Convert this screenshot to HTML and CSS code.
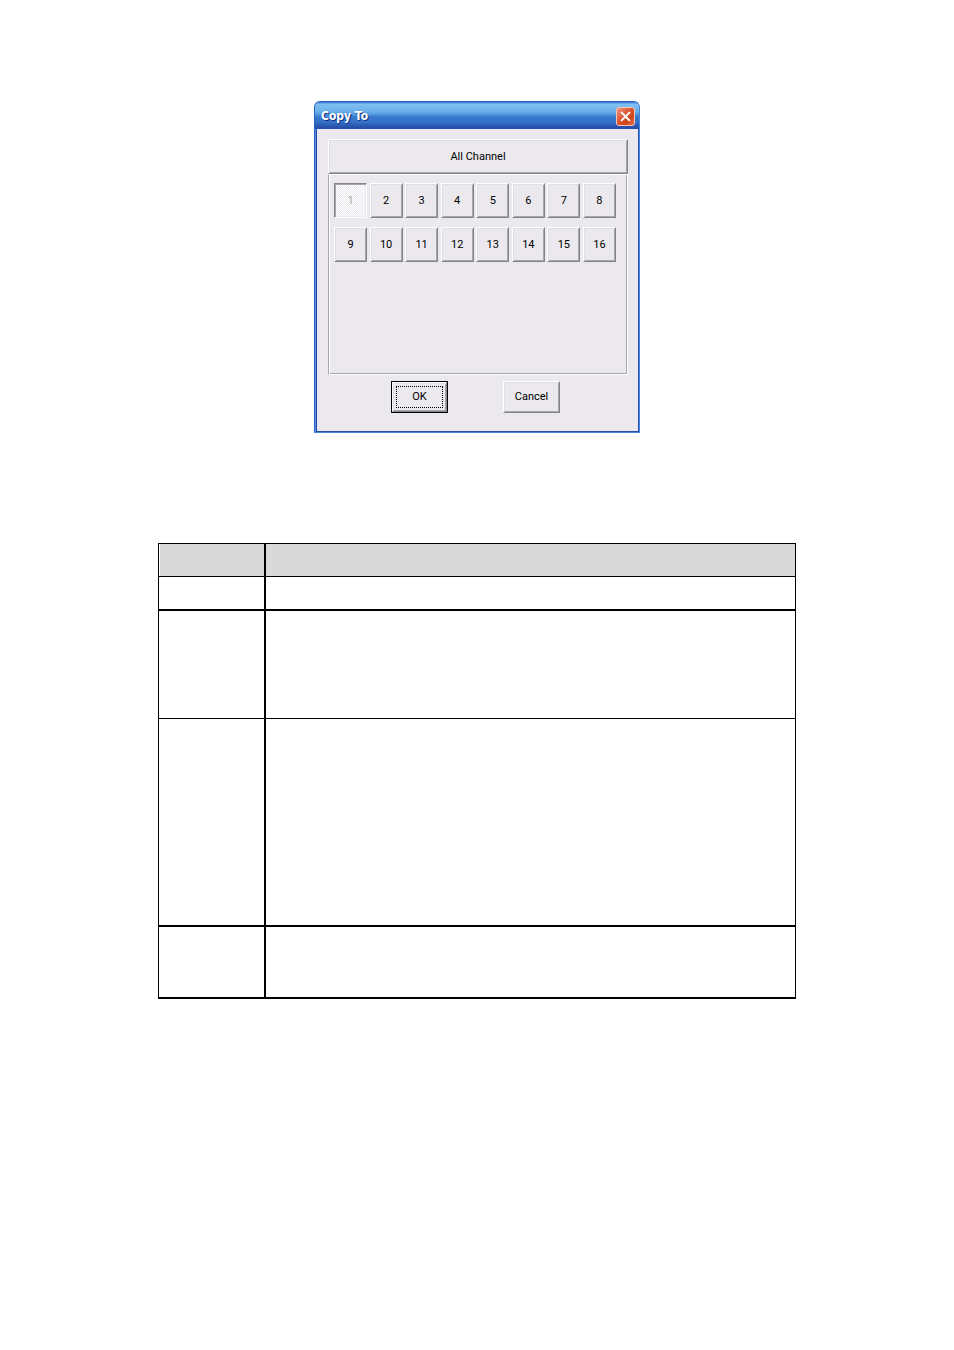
FILE: index.html
```html
<!DOCTYPE html>
<html lang="en">
<head>
<meta charset="utf-8">
<title>Copy To</title>
<link rel="stylesheet" href="styles.css">
</head>
<body>
<main class="page">
  <section class="dialog" role="dialog" aria-labelledby="dialog-title">
    <header class="titlebar">
      <h1 class="title" id="dialog-title">Copy To</h1>
      <button class="close" type="button" aria-label="Close">
        <svg class="close-icon" viewBox="0 0 18 18" aria-hidden="true">
          <path d="M5 5L13 13M13 5L5 13" fill="none" stroke="#fff" stroke-width="2" stroke-linecap="square"/>
        </svg>
      </button>
    </header>
    <div class="content">
      <button class="btn btn-all" type="button">All Channel</button>
      <div class="panel">
        <div class="channels">
          <button class="btn channel" type="button" disabled>1</button>
          <button class="btn channel" type="button">2</button>
          <button class="btn channel" type="button">3</button>
          <button class="btn channel" type="button">4</button>
          <button class="btn channel" type="button">5</button>
          <button class="btn channel" type="button">6</button>
          <button class="btn channel" type="button">7</button>
          <button class="btn channel" type="button">8</button>
          <button class="btn channel" type="button">9</button>
          <button class="btn channel" type="button">10</button>
          <button class="btn channel" type="button">11</button>
          <button class="btn channel" type="button">12</button>
          <button class="btn channel" type="button">13</button>
          <button class="btn channel" type="button">14</button>
          <button class="btn channel" type="button">15</button>
          <button class="btn channel" type="button">16</button>
        </div>
      </div>
      <footer class="actions">
        <button class="default-frame" type="button"><span class="default-face"><span class="focus-ring">OK</span></span></button>
        <button class="btn action" type="button">Cancel</button>
      </footer>
    </div>
  </section>

  <table class="info">
    <colgroup><col class="col-name"><col></colgroup>
    <thead>
      <tr class="row-head"><th></th><th></th></tr>
    </thead>
    <tbody>
      <tr class="row-line"><td></td><td></td></tr>
      <tr class="row-short"><td></td><td></td></tr>
      <tr class="row-tall"><td></td><td></td></tr>
      <tr class="row-last"><td></td><td></td></tr>
    </tbody>
  </table>
</main>
</body>
</html>
```
FILE: styles.css
```css
* {
  box-sizing: border-box;
}

body {
  margin: 0;
  background: #fff;
  color: #000;
  font-family: Roboto, "Liberation Sans", Arial, sans-serif;
  font-size: 11px;
}

.page {
  display: flex;
  flex-direction: column;
  align-items: center;
  gap: 110px;
  padding: 101px 16px;
}

/* Dialog window */
.dialog {
  width: 100%;
  max-width: 326px;
  border-radius: 6px 6px 0 0;
  background: #ebe9ed;
  border: 1px solid #2a62c8;
  border-right-color: #4a86dc;
  border-bottom-color: #4a86dc;
  box-shadow: inset 1px 0 #5590e4, inset 2px 0 #1f44a4, inset -1px 0 #2450b0, inset 0 -1px #2a4fa0;
}

.titlebar {
  display: flex;
  align-items: center;
  justify-content: space-between;
  height: 27px;
  padding: 3px 4px 2px 6px;
  border-radius: 5px 5px 0 0;
  background: linear-gradient(#2e6ed0 0, #80c0f2 8%, #6cb0ea 35%, #4c92de 48%, #3878cc 55%, #3470c8 75%, #2850ac 92%, #2450b0 100%);
}

.title {
  margin: 0;
  color: #fff;
  font-family: "DejaVu Sans Condensed", "DejaVu Sans", sans-serif;
  font-size: 12px;
  line-height: 16px;
  font-weight: bold;
  text-shadow: 1px 1px #14307c;
}

.close {
  display: flex;
  width: 19px;
  height: 19px;
  padding: 0;
  border: 1px solid #f4c4b4;
  border-radius: 3px;
  background: linear-gradient(135deg, #f09a80, #dc5430 45%, #d04418 70%, #e47450);
}

.close-icon {
  width: 100%;
  height: 100%;
}

.content {
  padding: 10px 11px 19px 13px;
}

/* Raised push buttons */
.btn {
  padding: 0 0 1px;
  border: 1px solid;
  border-color: #fff #868489 #868489 #fff;
  background: #ebe9ed;
  box-shadow: inset 1px 1px #dcdfe4, inset -1px -1px #a7a6aa;
  color: #000;
  font: inherit;
}

.btn-all {
  display: block;
  width: 100%;
  height: 35px;
}

.panel {
  height: 201px;
  padding: 8px 11px 0 5px;
  border: 1px solid;
  border-color: #fff #fff #fff #a7a6aa;
  box-shadow: inset 1px 0 #fff, inset -1px -1px #a7a6aa;
}

.channels {
  display: grid;
  grid-template-columns: repeat(8, 33px);
  justify-content: space-between;
  row-gap: 9px;
}

.channel {
  height: 35px;
}

.channel:disabled {
  border-color: #868489 #fff #fff #868489;
  background: repeating-conic-gradient(#fff 0 25%, #ebe9ed 0 50%) 0 0 / 2px 2px;
  box-shadow: inset 1px 1px #a7a6aa, inset -1px -1px #ebe9ed;
  color: #a7a6aa;
}

.actions {
  display: flex;
  justify-content: center;
  gap: 55px;
  padding: 6px 5px 0 0;
}

.action {
  width: 57px;
  height: 32px;
}

/* Default button with black frame and dotted focus ring */
.default-frame {
  width: 57px;
  height: 32px;
  padding: 0;
  border: 1px solid #000;
  background: #ebe9ed;
  color: #000;
  font: inherit;
}

.default-face {
  display: flex;
  height: 30px;
  padding: 3px;
  border: 1px solid;
  border-color: #fff #868489 #868489 #fff;
  box-shadow: inset 1px 1px #dcdfe4, inset -1px -1px #a7a6aa;
}

.focus-ring {
  flex: 1;
  border: 1px dotted #000;
  line-height: 19px;
}

/* Description table */
.info {
  width: 100%;
  max-width: 638px;
  table-layout: fixed;
  border-collapse: separate;
  border-spacing: 0;
  border: solid #000;
  border-width: 1px 1px 0;
}

.col-name {
  width: 107px;
}

.info th,
.info td {
  padding: 0;
  border-bottom: 2px solid #000;
}

.info th:first-child,
.info td:first-child {
  border-right: 2px solid #000;
}

.info th,
.info .row-short td {
  border-bottom-width: 1px;
}

.info th {
  background: #d9d9d9;
}

.info th:first-child {
  box-shadow: inset 1px 0 #fff;
}

.row-head {
  height: 33px;
}

.row-line {
  height: 34px;
}

.row-short {
  height: 108px;
}

.row-tall {
  height: 208px;
}

.row-last {
  height: 72px;
}
```
